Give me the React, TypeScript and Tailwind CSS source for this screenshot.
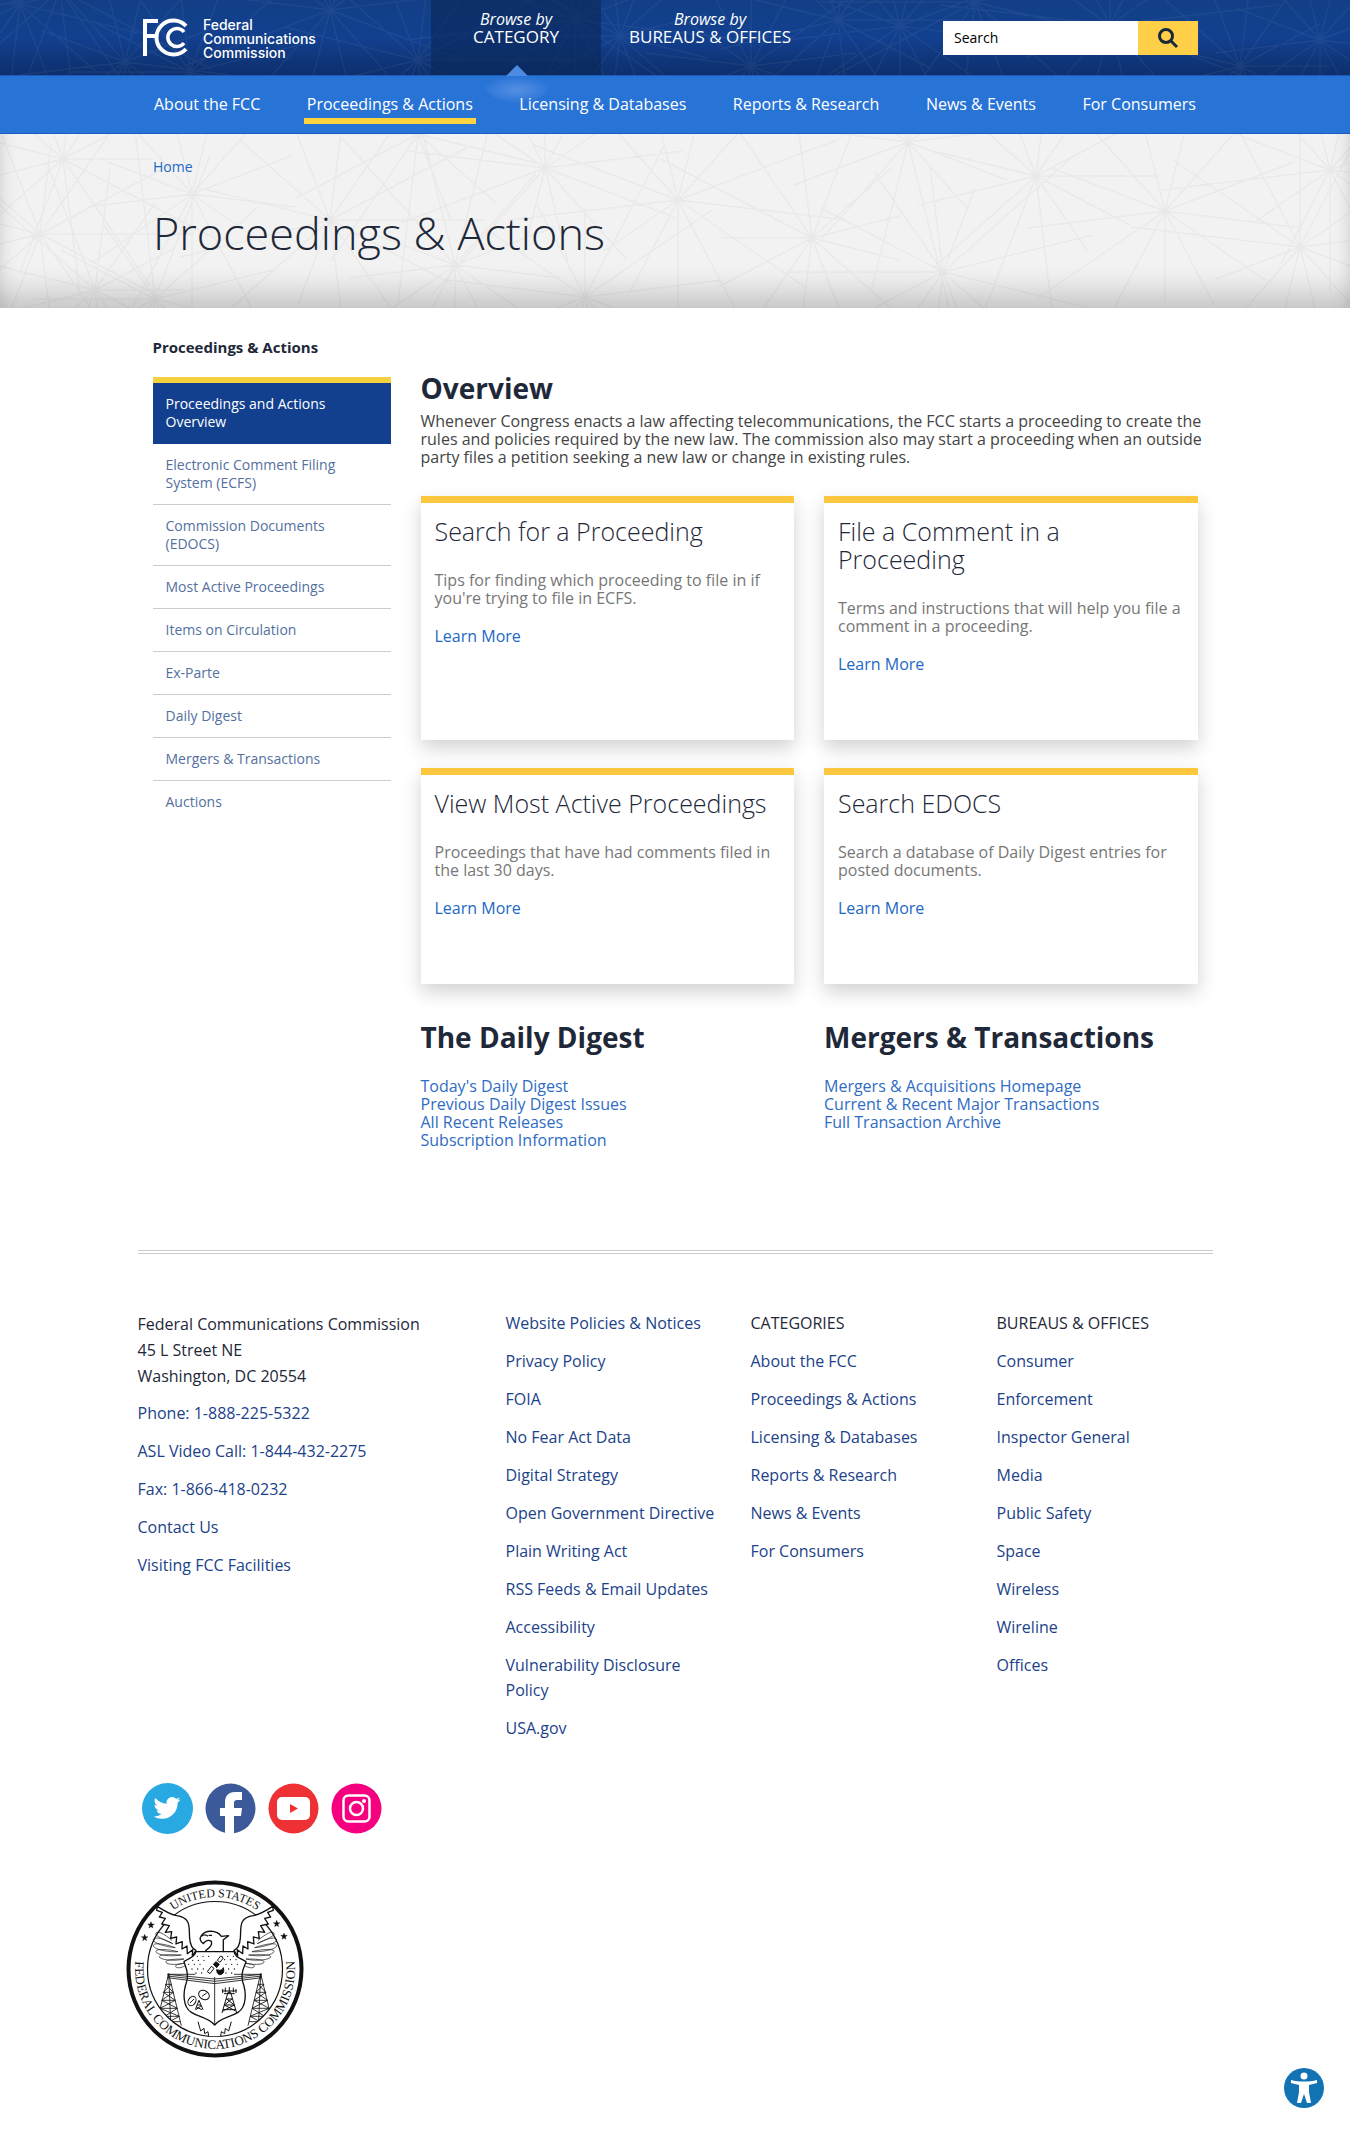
import React from "react";

const headerHubs = [
  [60, -10], [125, 62], [190, 72], [330, 10], [418, 60], [575, 20], [620, 36], [751, 66],
  [838, 20], [900, 26], [975, 2], [1110, 25], [1240, 66], [1320, 40], [20, 4],
];

const heroHubs = [
  [63, 25], [192, 60], [418, 0], [545, 34], [330, 86], [678, 66], [812, 104], [908, 8], [1036, 42],
  [1165, 77], [943, 138], [1300, 113], [95, 156], [455, 131], [155, 165], [585, 163], [40, 100], [1330, 36],
];

function Web({ hubs, stroke, height }: { hubs: number[][]; stroke: string; height: number }) {
  let d = "";
  hubs.forEach(([x, y], i) => {
    for (let k = 0; k < 13; k++) {
      const a = ((k + (i % 4) / 4) * Math.PI * 2) / 13;
      const r = 90 + ((i * 7 + k * 5) % 6) * 16;
      d += `M${x} ${y}L${Math.round(x + Math.cos(a) * r)} ${Math.round(y + Math.sin(a) * r)}`;
    }
  });
  return (
    <svg aria-hidden="true" className="absolute inset-0 h-full w-full" viewBox={`0 0 1350 ${height}`} preserveAspectRatio="xMidYMid slice" fill="none" stroke={stroke} strokeWidth="1.5">
      <path d={d} />
    </svg>
  );
}

const nav = ["About the FCC", "Proceedings & Actions", "Licensing & Databases", "Reports & Research", "News & Events", "For Consumers"];

const side = [
  "Proceedings and Actions Overview", "Electronic Comment Filing System (ECFS)", "Commission Documents (EDOCS)",
  "Most Active Proceedings", "Items on Circulation", "Ex-Parte", "Daily Digest", "Mergers & Transactions", "Auctions",
];

const cards = [
  ["Search for a Proceeding", "Tips for finding which proceeding to file in if you're trying to file in ECFS."],
  ["File a Comment in a Proceeding", "Terms and instructions that will help you file a comment in a proceeding."],
  ["View Most Active Proceedings", "Proceedings that have had comments filed in the last 30 days."],
  ["Search EDOCS", "Search a database of Daily Digest entries for posted documents."],
];

const lists = [
  { title: "The Daily Digest", links: ["Today's Daily Digest", "Previous Daily Digest Issues", "All Recent Releases", "Subscription Information"] },
  { title: "Mergers & Transactions", links: ["Mergers & Acquisitions Homepage", "Current & Recent Major Transactions", "Full Transaction Archive"] },
];

const contact = ["Phone: 1-888-225-5322", "ASL Video Call: 1-844-432-2275", "Fax: 1-866-418-0232", "Contact Us", "Visiting FCC Facilities"];

const footer = [
  { title: "", links: ["Website Policies & Notices", "Privacy Policy", "FOIA", "No Fear Act Data", "Digital Strategy", "Open Government Directive", "Plain Writing Act", "RSS Feeds & Email Updates", "Accessibility", "Vulnerability Disclosure Policy", "USA.gov"] },
  { title: "CATEGORIES", links: nav },
  { title: "BUREAUS & OFFICES", links: ["Consumer", "Enforcement", "Inspector General", "Media", "Public Safety", "Space", "Wireless", "Wireline", "Offices"] },
];

function Social() {
  return (
    <div className="ml-1 flex gap-3">
      <a href="#" aria-label="Twitter">
        <svg viewBox="0 0 51 51" className="size-[51px]">
          <circle cx="25.5" cy="25.5" r="25.5" fill="#29a9e1" />
          <path transform="translate(11.5 11.5) scale(1.12)" fill="#fff" d="M23.953 4.57a10 10 0 01-2.825.775 4.958 4.958 0 002.163-2.723c-.951.555-2.005.959-3.127 1.184a4.92 4.92 0 00-8.384 4.482C7.69 8.095 4.067 6.13 1.64 3.162a4.822 4.822 0 00-.666 2.475c0 1.71.87 3.213 2.188 4.096a4.904 4.904 0 01-2.228-.616v.06a4.923 4.923 0 003.946 4.827 4.996 4.996 0 01-2.212.085 4.936 4.936 0 004.604 3.417 9.867 9.867 0 01-6.102 2.105c-.39 0-.779-.023-1.17-.067a13.995 13.995 0 007.557 2.209c9.053 0 13.998-7.496 13.998-13.985 0-.21 0-.42-.015-.63A9.935 9.935 0 0024 4.59z" />
        </svg>
      </a>
      <a href="#" aria-label="Facebook">
        <svg viewBox="0 0 51 51" className="size-[51px]">
          <circle cx="25.5" cy="25.5" r="25" fill="#3c5a9a" />
          <path fill="#fff" d="M20 51V33h-5v-8h5v-5c0-7 3-11 10-11h7v8h-5c-2 0-3 1-3 3v5h8l-1 8h-7v18Z" />
        </svg>
      </a>
      <a href="#" aria-label="YouTube">
        <svg viewBox="0 0 51 51" className="size-[51px]">
          <circle cx="25.5" cy="25.5" r="25" fill="#ee3135" />
          <rect x="9" y="14" width="33" height="23" rx="5" fill="#fff" />
          <path d="M22 21v9l8-4.5z" fill="#ee3135" />
        </svg>
      </a>
      <a href="#" aria-label="Instagram">
        <svg viewBox="0 0 51 51" className="size-[51px]">
          <circle cx="25.5" cy="25.5" r="25" fill="#f5007e" />
          <g fill="none" stroke="#fff" strokeWidth="2.5">
            <rect x="12.5" y="12.5" width="26" height="26" rx="5" />
            <circle cx="25.5" cy="25.5" r="6.5" />
          </g>
          <circle cx="33" cy="18" r="2" fill="#fff" />
        </svg>
      </a>
    </div>
  );
}

function Star({ x, y }: { x: number; y: number }) {
  return <path transform={`translate(${x} ${y})`} d="M0-10 3-3 10-3 4 2 6 9 0 5-6 9-4 2-10-3-3-3Z" fill="#111" />;
}

function Wing() {
  return (
    <g>
      <path strokeWidth="2" d="M150 196C128 178 108 166 102 174S130 196 152 206C124 190 96 184 94 194S132 216 160 218C126 206 94 202 94 212S134 232 168 230C134 222 100 220 102 230S144 246 178 240C142 238 110 238 112 246S156 260 186 252C156 252 128 254 132 262S170 270 190 264C172 266 156 270 162 276S186 276 192 270" />
      <path fill="#fff" strokeWidth="4" d="M106 94C130 110 146 118 164 122 210 128 200 160 203 190 205 214 212 222 222 226L211 243 212 224 196 236 195 213 180 222 181 200 162 207 164 186 146 190 149 170 130 172 142 152 119 147 130 130 112 126 121 112 104 106Z" />
    </g>
  );
}

function Tower() {
  return (
    <path strokeWidth="2.5" d="M140 296 112 412M140 296 178 452M140 296 146 440M130 328h18M124 352h30M119 376h41M114 400h52M128 424h44M142 440h33M130 328l24 24-35 24 47 24-38 24M148 328l-24 24 36 24-46 24 58 24-30 16" />
  );
}

function Seal() {
  return (
    <svg role="img" aria-label="Seal of the Federal Communications Commission" viewBox="0 0 178 178" className="size-[178px]" fill="none" stroke="#111">
      <defs>
        <path id="sealTop" d="M17 89a72 72 0 0 1 144 0" />
        <path id="sealBottom" d="M14.8 59A80 80 0 1 0 163.2 59" />
        <clipPath id="sealInner"><circle cx="279" cy="282" r="202" /></clipPath>
      </defs>
      <circle cx="89" cy="89" r="86.5" strokeWidth="4" fill="#fff" />
      <circle cx="89" cy="89" r="67.5" strokeWidth="1.2" />
      <g transform="translate(-4 -5) scale(.3333)" strokeLinejoin="round">
        <Star x={87} y={150} /><Star x={68} y={188} /><Star x={464} y={146} /><Star x={486} y={184} />
        <g clipPath="url(#sealInner)">
          <Tower />
          <g transform="translate(556 0) scale(-1 1)"><Tower /></g>
          <path strokeWidth="3" fill="#fff" d="M228 440 236 468 246 460 248 476 258 470 260 484 278 490 296 484 298 470 308 476 310 460 320 468 328 440" />
        </g>
        <Wing />
        <g transform="translate(558 0) scale(-1 1)"><Wing /></g>
        <path strokeWidth="4" fill="#fff" d="M250 228C264 216 272 210 268 199 260 194 250 196 244 206 234 200 232 190 238 182 250 164 284 164 298 184L320 182 304 194 304 228M238 184C246 178 254 180 258 184M260 181h10" />
        <path strokeWidth="4" fill="#fff" d="M222 230H336C340 248 354 248 372 260 368 276 354 290 362 320 374 352 374 396 348 412 322 428 296 428 278 450 260 428 234 428 208 412 182 396 182 352 194 320 202 290 190 276 186 260 202 248 218 248 222 230Z" />
        <path strokeWidth="2.5" d="M136 298 278 312 420 298M136 303 278 319 420 303M136 308 278 326 420 308M136 298H220M420 298H336M278 306V450" />
        <path strokeWidth="4" strokeLinecap="round" strokeDasharray="0 17" d="M226 244H262M300 244H336M212 256H256M308 254H350M200 268H250M312 268H358M210 282H246M320 282H350M222 294H256M312 294H340" />
        <g strokeWidth="3">
          <path fill="#fff" d="M286 256 296 243 304 249 294 262ZM256 290 268 274 276 280 264 296Z" />
          <path fill="#111" d="M274 268 282 260 292 268 284 278ZM284 284Q300 290 304 278 310 298 292 299 284 296 284 284Z" />
          <ellipse cx="246" cy="360" rx="17" ry="13" transform="rotate(30 246 360)" />
          <ellipse cx="210" cy="378" rx="11" ry="15" transform="rotate(30 210 378)" />
          <path d="M204 384 216 372M240 364 254 354M220 404 231 376 243 404M226 390h11M224 397 240 404M238 392 222 404" />
          <path d="M300 414 318 352H326L344 414M312 372h20M307 390h30M303 404h38M314 372 337 390 303 408M330 372 307 390 341 408M322 336v20M300 348h44M306 356h32M302 342v12M310 338v14M334 338v14M342 342v12" />
        </g>
      </g>
      <g fill="#111" stroke="none" fontFamily="Liberation Serif, serif">
        <text textAnchor="middle" fontSize="12"><textPath href="#sealTop" startOffset="50%">UNITED STATES</textPath></text>
        <text textAnchor="middle" fontSize="13"><textPath href="#sealBottom" startOffset="50%">FEDERAL COMMUNICATIONS COMMISSION</textPath></text>
      </g>
    </svg>
  );
}

export default function App() {
  return (
    <div className="relative min-h-screen bg-white font-['Open_Sans',sans-serif] text-[#1e2838]">
      <header className="relative h-[75px] overflow-hidden bg-linear-to-b from-[#123f86] via-[#12408f] to-[#0d2f6c]">
        <Web hubs={headerHubs} stroke="#ffffff0d" height={75} />
        <div className="relative mx-auto flex h-full max-w-[1064px] items-start">
          <a href="#" className="mt-[18px] flex w-[288px] gap-[15px]">
            <svg viewBox="0 0 45 39" className="h-[39px] w-[45px]" fill="none" stroke="#fff">
              <path strokeWidth="4" d="M2 38V3h13M2 18h11" />
              <path strokeWidth="4" d="M43 8A17 17 0 1 0 43 31" />
              <path strokeWidth="3.5" d="M41 14A9 9 0 1 0 41 25" />
            </svg>
            <span className="font-['Inter',sans-serif] text-sm leading-[14px] font-medium text-white">Federal<br />Communications<br />Commission</span>
          </a>
          <a href="#" className="h-full w-[170px] bg-[#0a2757]/60 pt-[10px] text-center text-white">
            <span className="block text-base leading-[18px] italic">Browse by</span>
            <span className="block text-[17px] leading-[18px]">CATEGORY</span>
          </a>
          <a href="#" className="h-full px-7 pt-[10px] text-center text-white">
            <span className="block text-base leading-[18px] italic">Browse by</span>
            <span className="block text-[17px] leading-[18px]">BUREAUS &amp; OFFICES</span>
          </a>
          <form className="mt-[21px] mr-[9px] ml-auto flex h-[34px]">
            <input aria-label="Search" placeholder="Search" className="w-[195px] bg-white px-[11px] text-sm text-black placeholder:text-black" />
            <button type="button" aria-label="Submit search" className="flex w-[60px] items-center justify-center bg-[#ffcf48]">
              <svg viewBox="0 0 22 22" className="size-[22px]" fill="none" stroke="#162a3a" strokeWidth="3">
                <circle cx="9" cy="9" r="6.5" /><path d="m14 14 6 6" />
              </svg>
            </button>
          </form>
        </div>
      </header>

      <nav className="relative h-[59px] border-t border-b border-t-[#1b5cb8] border-b-[#1c5cbc] bg-[#2873d6]">
        <div className="relative mx-auto flex max-w-[1048px] items-start justify-between pt-4">
          <svg aria-hidden="true" viewBox="0 0 80 50" className="absolute -top-4 left-[326px] h-[50px] w-20">
            <defs><radialGradient id="glow"><stop offset="0" stopColor="#5590e4" /><stop offset="1" stopColor="#5590e4" stopOpacity="0" /></radialGradient></defs>
            <path d="M4 16h72c0 14-14 28-36 28S4 30 4 16Z" fill="url(#glow)" />
            <path d="M29 16 40 5l11 11z" fill="#4d8be2" />
          </svg>
          {nav.map((n, i) => (
            <a key={n} href="#" className={i === 1 ? "relative border-b-[6px] border-[#fbd43f] px-[3px] pb-[2px] text-base leading-6 text-white" : "relative px-[3px] text-base leading-6 text-white"}>{n}</a>
          ))}
        </div>
      </nav>

      <section className="relative h-[174px] overflow-hidden bg-[#f2f2f2] shadow-[inset_0_-34px_30px_-20px_#0003,inset_20px_0_20px_-20px_#0002,inset_-20px_0_20px_-20px_#0002]">
        <Web hubs={heroHubs} stroke="#00000009" height={174} />
        <div className="relative mx-auto max-w-[1044px] pt-[23px]">
          <a href="#" className="block text-sm leading-5 text-[#2368c4]">Home</a>
          <h1 className="mt-5 text-[45px] leading-[72px] font-light">Proceedings &amp; Actions</h1>
        </div>
      </section>

      <main className="mx-auto flex max-w-[1045px] gap-[30px] pt-[29px]">
        <aside className="w-[238px] shrink-0">
          <h2 className="text-[15px] leading-5 font-bold">Proceedings &amp; Actions</h2>
          <ul className="mt-5 border-t-[6px] border-[#f6d13f]">
            {side.map((s, i) => (
              <li key={s}>
                <a href="#" className={i === 0 ? "block border-b border-[#12408e] bg-[#12408e] px-[13px] py-3 text-sm leading-[18px] text-white" : i === 8 ? "block px-[13px] py-3 text-sm leading-[18px] text-[#5470a0]" : "block border-b border-[#ccc] px-[13px] py-3 text-sm leading-[18px] text-[#5470a0]"}>{s}</a>
              </li>
            ))}
          </ul>
        </aside>
        <div className="min-w-0 flex-1 pt-[31px]">
          <h2 className="text-[28px] leading-10 font-bold">Overview</h2>
          <p className="mt-1 -mr-3 text-base leading-[18px] text-[#444]">Whenever Congress enacts a law affecting telecommunications, the FCC starts a proceeding to create the rules and policies required by the new law. The commission also may start a proceeding when an outside party files a petition seeking a new law or change in existing rules.</p>
          <div className="mt-[30px] grid grid-cols-2 gap-x-[30px] gap-y-7">
            {cards.map(([t, d]) => (
              <article key={t} className="border-t-[7px] border-[#fdc840] bg-white px-[14px] pt-[14px] pb-[67px] shadow-[0_8px_18px_rgba(0,0,0,0.18)]">
                <h3 className="text-[25px] leading-7 font-light">{t}</h3>
                <p className="mt-[26px] text-base leading-[18px] text-[#777]">{d}</p>
                <a href="#" className="mt-5 block text-base leading-[18px] text-[#2368c4]">Learn More</a>
              </article>
            ))}
          </div>
          <div className="mt-[33px] grid grid-cols-2 gap-[30px]">
            {lists.map((l) => (
              <section key={l.title}>
                <h2 className="text-[28px] leading-10 font-bold">{l.title}</h2>
                <ul className="mt-5">
                  {l.links.map((x) => <li key={x} className="text-base leading-[18px] text-[#2f6cc4]"><a href="#">{x}</a></li>)}
                </ul>
              </section>
            ))}
          </div>
        </div>
      </main>

      <footer className="mx-auto mt-[101px] max-w-[1075px] border-t-4 border-double border-[#ccc] pt-[57px] pb-[80px] text-base leading-[25px]">
        <div className="grid grid-cols-[368fr_245fr_246fr_216fr]">
          <div>
            <address className="leading-[26px] not-italic">Federal Communications Commission<br />45 L Street NE<br />Washington, DC 20554</address>
            <ul className="mt-3 flex flex-col gap-[13px] text-[#1b4289]">
              {contact.map((c) => <li key={c}><a href="#">{c}</a></li>)}
            </ul>
          </div>
          {footer.map((f, i) => (
            <div key={i} className="pr-[30px]">
              {f.title && <h2 className="mb-[13px] whitespace-nowrap">{f.title}</h2>}
              <ul className="flex flex-col gap-[13px] text-[#1b4289]">
                {f.links.map((x) => <li key={x}><a href="#">{x}</a></li>)}
              </ul>
            </div>
          ))}
        </div>
        <div className="mt-[42px]"><Social /></div>
        <div className="mt-[46px] -ml-3"><Seal /></div>
      </footer>

      <button type="button" aria-label="Accessibility options" className="absolute right-[26px] bottom-[31px]">
        <svg viewBox="0 0 40 40" className="size-10">
          <circle cx="20" cy="20" r="20" fill="#1173b4" />
          <circle cx="20" cy="8" r="3.5" fill="#fff" />
          <path d="M7 12c8 2 18 2 26 0v3l-8 2v7l2 11h-4l-3-9-3 9h-4l2-11v-7l-8-2z" fill="#fff" />
        </svg>
      </button>
    </div>
  );
}
